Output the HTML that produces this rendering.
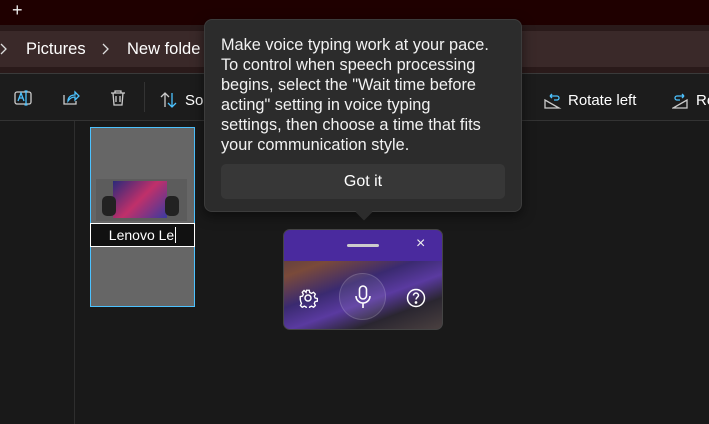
<!DOCTYPE html>
<html><head><meta charset="utf-8"><style>
*{margin:0;padding:0;box-sizing:border-box}
body{width:709px;height:424px;overflow:hidden;background:#191919;font-family:"Segoe UI","Liberation Sans",sans-serif;color:#fff;position:relative}
.a{position:absolute}
</style></head><body>
<div class="a" style="left:0;top:0;width:709px;height:25px;background:#1f0000"></div>
<div class="a" style="left:12px;top:0px;font-size:18px;color:#eee">+</div>
<div class="a" style="left:0;top:25px;width:709px;height:48px;background:#2a1a1a"></div>
<div class="a" style="left:0;top:31px;width:709px;height:36px;background:#3a2929"></div>
<div class="a" style="left:0;top:73px;width:709px;height:1px;background:#3a3a3a"></div>
<div class="a" style="left:0;top:74px;width:709px;height:46px;background:#1c1c1c"></div>
<div class="a" style="left:0;top:120px;width:709px;height:1px;background:#333"></div>
<div class="a" style="left:74px;top:121px;width:1px;height:303px;background:#2e2e2e"></div>
<svg class="a" style="left:0;top:43px" width="8" height="12" viewBox="0 0 8 12" fill="none" stroke="#ddd" stroke-width="1.3"><path d="M1 1l5 5-5 5"/></svg>
<div class="a" style="left:26px;top:40px;font-size:16.5px">Pictures</div>
<svg class="a" style="left:102px;top:43px" width="8" height="12" viewBox="0 0 8 12" fill="none" stroke="#ddd" stroke-width="1.3"><path d="M1 1l5 5-5 5"/></svg>
<div class="a" style="left:127px;top:40px;font-size:16.5px">New folde</div>
<svg class="a" style="left:14px;top:89px" width="18" height="18" viewBox="0 0 18 18" fill="none" stroke="#4cc2ff" stroke-width="1.3"><rect x="1" y="3" width="16" height="12" rx="2" stroke="#ccc"/><path d="M4 12l3-8 3 8M5 9h4M12 2v14M10.5 2h3M10.5 16h3"/></svg>
<svg class="a" style="left:62px;top:89px" width="18" height="18" viewBox="0 0 18 18" fill="none" stroke-width="1.3"><path d="M2 6v9h12v-3" stroke="#ccc"/><path d="M6 12c0-4 3-6 7-6V3l4 4-4 4V8c-3 0-5 1-7 4z" stroke="#4cc2ff"/></svg>
<svg class="a" style="left:110px;top:89px" width="16" height="18" viewBox="0 0 16 18" fill="none" stroke="#ccc" stroke-width="1.3"><path d="M1 4h14M5 4V2h6v2M3 4l1 12h8l1-12M6 7v6M10 7v6"/></svg>
<div class="a" style="left:144px;top:82px;width:1px;height:30px;background:#333"></div>
<svg class="a" style="left:160px;top:92px" width="18" height="16" viewBox="0 0 18 16" fill="none" stroke-width="1.3"><path d="M5 15V1M1 5l4-4 4 4" stroke="#ccc"/><path d="M12 1v14M8 11l4 4 4-4" stroke="#4cc2ff"/></svg>
<div class="a" style="left:185px;top:92px;font-size:15px">Sort</div>
<svg class="a" style="left:544px;top:93px" width="18" height="16" viewBox="0 0 18 16" fill="none" stroke-width="1.3"><path d="M1 15h14L1 7z" stroke="#ccc"/><path d="M6 3h7a2 2 0 010 4h-3M6 3l2-2M6 3l2 2" stroke="#4cc2ff"/></svg>
<div class="a" style="left:568px;top:92px;font-size:15px">Rotate left</div>
<svg class="a" style="left:672px;top:93px" width="18" height="16" viewBox="0 0 18 16" fill="none" stroke-width="1.3"><path d="M1 15h14V7z" stroke="#ccc"/><path d="M12 3H5a2 2 0 000 4h3M12 3l-2-2M12 3l-2 2" stroke="#4cc2ff"/></svg>
<div class="a" style="left:696px;top:92px;font-size:15px">Ro</div>
<div class="a" style="left:90px;top:127px;width:105px;height:180px;background:#666;border:1px solid #4cc2ff"></div>
<div class="a" style="left:96px;top:179px;width:91px;height:42px;background:#5c5c5c"></div>
<div class="a" style="left:113px;top:181px;width:54px;height:37px;background:linear-gradient(135deg,#2b2a7a,#c0306a 50%,#3a3aa0)"></div>
<div class="a" style="left:102px;top:196px;width:14px;height:20px;background:#222;border-radius:5px"></div>
<div class="a" style="left:165px;top:196px;width:14px;height:20px;background:#222;border-radius:5px"></div>
<div class="a" style="left:90px;top:223px;width:105px;height:24px;background:#111;border:1px solid #fff;font-size:14px;text-align:center;line-height:22px">Lenovo Le<span style="border-left:1px solid #fff;margin-left:1px"></span></div>
<div class="a" style="left:204px;top:19px;width:318px;height:193px;background:#2c2c2c;border:1px solid #3c3c3c;border-radius:8px;box-shadow:0 4px 12px rgba(0,0,0,.5)"></div>
<div class="a" style="left:358px;top:206px;width:12px;height:12px;background:#2c2c2c;transform:rotate(45deg)"></div>
<div class="a" style="left:221px;top:35px;width:300px;font-size:16.3px;line-height:20px;color:#f2f2f2;white-space:nowrap">Make voice typing work at your pace.<br>To control when speech processing<br>begins, select the "Wait time before<br>acting" setting in voice typing<br>settings, then choose a time that fits<br>your communication style.</div>
<div class="a" style="left:221px;top:164px;width:284px;height:35px;background:#373737;border-radius:5px;text-align:center;line-height:35px;font-size:16px">Got it</div>
<div class="a" style="left:283px;top:229px;width:160px;height:101px;border-radius:7px;overflow:hidden;border:1px solid #444;background:linear-gradient(160deg,#3b2f4a 0%,#7a4a3a 30%,#3a2a70 50%,#5a3aa0 65%,#2a2630 80%,#4a4040 100%)">
<div style="height:31px;background:#4a2a9e"></div></div>
<div class="a" style="left:347px;top:244px;width:32px;height:3px;background:#ccc;border-radius:2px"></div>
<div class="a" style="left:416px;top:235px;font-size:16px;color:#eee">×</div>
<div class="a" style="left:339px;top:273px;width:47px;height:47px;border-radius:50%;background:rgba(255,255,255,.08);border:1px solid rgba(255,255,255,.15)"></div>
<svg class="a" style="left:353px;top:285px" width="20" height="24" viewBox="0 0 20 24" fill="none" stroke="#fff" stroke-width="1.6"><rect x="6.5" y="1" width="7" height="13" rx="3.5"/><path d="M3 11a7 7 0 0014 0M10 18v5"/></svg>
<svg class="a" style="left:298px;top:288px" width="20" height="20" viewBox="0 0 20 20" fill="none" stroke="#fff" stroke-width="1.5"><circle cx="10" cy="10" r="3"/><path d="M8.5 1.5h3l.5 2.5 2 1 2.3-1.2 2 2-1.2 2.3.9 2 2.5.5v3l-2.5.5-.9 2 1.2 2.3-2 2-2.3-1.2-2 .9-.5 2.5h-3l-.5-2.5-2-.9-2.3 1.2-2-2 1.2-2.3-.9-2L1.5 11.5v-3l2.5-.5.9-2-1.2-2.3 2-2L8 3.9z" transform="scale(.9) translate(1 1)"/></svg>
<svg class="a" style="left:406px;top:288px" width="20" height="20" viewBox="0 0 20 20" fill="none" stroke="#fff" stroke-width="1.5"><circle cx="10" cy="10" r="8.5"/><path d="M7.5 7.5a2.5 2.5 0 115 0c0 1.5-2.5 2-2.5 4"/><circle cx="10" cy="14.5" r=".6" fill="#fff"/></svg>
</body></html>
